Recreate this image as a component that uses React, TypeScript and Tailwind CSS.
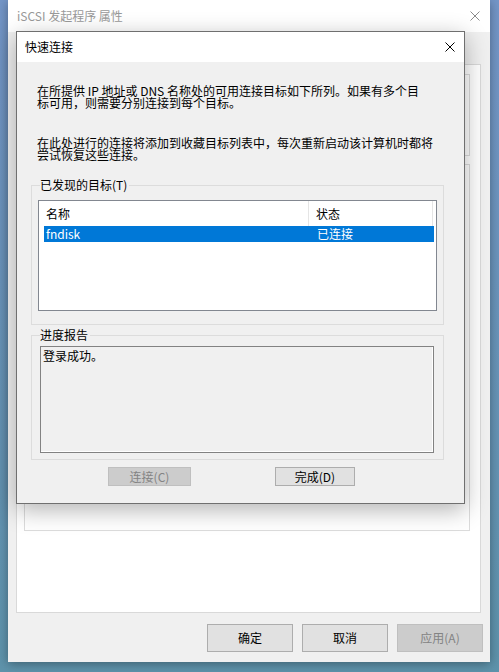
import React from 'react';

const font = { fontFamily: '"Noto Sans CJK SC", "Noto Sans", sans-serif' };

const CloseX = ({ color }: { color: string }) => (
  <svg width="10" height="10" viewBox="0 0 10 10" className="block">
    <path d="M0.5 0.5 L9.5 9.5 M9.5 0.5 L0.5 9.5" stroke={color} strokeWidth="1" fill="none" />
  </svg>
);

const OuterDialog = () => {
  return (
    <div className="absolute left-[8px] top-0 w-[482px] h-[662px] bg-[#f0f0f0] flex flex-col shadow-[0_2px_10px_rgba(0,0,0,0.35)]">
      {/* title bar */}
      <div className="h-[32px] bg-white flex items-center justify-between pl-[9px] pr-[10px]">
        <span className="text-[12px] text-[#999999]">iSCSI 发起程序 属性</span>
        <CloseX color="#8a8a8a" />
      </div>

      {/* tab page */}
      <div className="mt-[32px] ml-[8px] w-[465px] h-[549px] bg-white border border-[#d9d9d9] pl-[7px] pt-[9px]">
        <div className="w-[446px] h-[82px] border border-[#dcdcdc]" />
        <div className="mt-[8px] w-[446px] h-[367px] border border-[#dcdcdc]" />
      </div>

      {/* bottom buttons */}
      <div className="mt-[11px] flex justify-end gap-[9px] pr-[7px]">
        <button className="w-[86px] h-[28px] bg-[#e1e1e1] border border-[#adadad] text-[12px] text-black">确定</button>
        <button className="w-[86px] h-[28px] bg-[#e1e1e1] border border-[#adadad] text-[12px] text-black">取消</button>
        <button className="w-[86px] h-[28px] bg-[#cccccc] border border-[#bfbfbf] text-[12px] text-[#838383]">应用(A)</button>
      </div>
    </div>
  );
};

const GroupBox = ({ label, className, children }: { label: string; className: string; children: React.ReactNode }) => (
  <div className={`relative border border-[#dcdcdc] ${className}`}>
    <span className="absolute left-[8px] -top-[7px] bg-[#f0f0f0] pr-[2px] text-[12px] leading-[12px]">{label}</span>
    {children}
  </div>
);

const QuickConnect = () => {
  return (
    <div className="absolute left-[16px] top-[31px] w-[449px] h-[473px] border border-[#6f6f6f] bg-[#f0f0f0] flex flex-col shadow-[0_6px_22px_rgba(0,0,0,0.3)]">
      {/* title bar */}
      <div className="h-[30px] bg-white flex items-center justify-between pl-[8px] pr-[9px]">
        <span className="text-[12px] text-black">快速连接</span>
        <CloseX color="#000000" />
      </div>

      <div className="flex-1 pl-[14px] pt-[23px] text-[12px] leading-[12px] text-black">
        <p className="ml-[6px]">
          在所提供 IP 地址或 DNS 名称处的可用连接目标如下所列。如果有多个目
          <br />
          标可用，则需要分别连接到每个目标。
        </p>
        <p className="ml-[6px] mt-[28px]">
          在此处进行的连接将添加到收藏目标列表中，每次重新启动该计算机时都将
          <br />
          尝试恢复这些连接。
        </p>

        <GroupBox label="已发现的目标(T)" className="mt-[24px] w-[413px] h-[140px] pl-[6px] pt-[14px]">
          <div className="w-[399px] h-[111px] border border-[#828790] bg-white">
            <div className="h-[25px] flex">
              <div className="w-[270px] border-r border-[#e5e5e5] pl-[7px] flex items-center">名称</div>
              <div className="w-[124px] border-r border-[#e5e5e5] pl-[7px] flex items-center">状态</div>
            </div>
            <div className="ml-[5px] w-[390px] h-[16px] bg-[#0078d7] text-white flex items-center">
              <div className="w-[266px] pl-[2px]">fndisk</div>
              <div className="pl-[7px]">已连接</div>
            </div>
          </div>
        </GroupBox>

        <GroupBox label="进度报告" className="mt-[10px] w-[413px] h-[125px] pl-[8px] pt-[10px]">
          <div className="w-[394px] h-[107px] border border-[#828282] shadow-[inset_-1px_-1px_0_#ffffff] pl-[2px] pt-[3px]">
            登录成功。
          </div>
        </GroupBox>

        <div className="mt-[7px] flex">
          <button className="ml-[77px] w-[83px] h-[19px] bg-[#cccccc] border border-[#bfbfbf] text-[#838383] text-[12px] leading-[12px]">连接(C)</button>
          <button className="ml-[84px] w-[80px] h-[19px] bg-[#e1e1e1] border border-[#adadad] text-black text-[12px] leading-[12px]">完成(D)</button>
        </div>
      </div>
    </div>
  );
};

export default function App() {
  return (
    <div className="relative w-[499px] h-[672px] overflow-hidden bg-gradient-to-b from-[#7496c8] to-[#5e93ab]" style={font}>
      <OuterDialog />
      <QuickConnect />
    </div>
  );
}
